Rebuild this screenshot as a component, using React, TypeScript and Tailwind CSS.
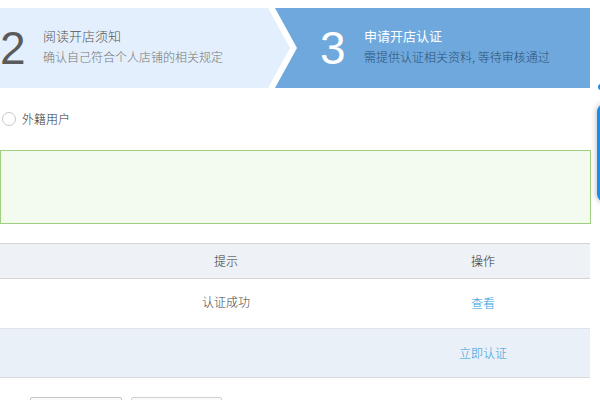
const cjk = "font-['Microsoft_YaHei','Noto_Sans_CJK_SC',sans-serif]";

function Steps() {
  return (
    <div className="relative mt-2 h-20 w-[590px] bg-[#6fa8dc]">
      {/* white chevron border, then light step on top */}
      <div className="absolute inset-y-0 left-0 w-[298px] bg-white [clip-path:polygon(0_0,275px_0,297px_40px,275px_80px,0_80px)]" />
      <div className="absolute inset-y-0 left-0 w-[291px] bg-[#e3effc] [clip-path:polygon(0_0,268px_0,290px_40px,268px_80px,0_80px)]" />
      <div className="relative flex h-full items-center">
        <div className="flex w-[320px] items-center">
          <span className="w-[43px] pb-[1px] font-['Liberation_Sans',sans-serif] text-[46px] leading-none font-light text-[#5a5a5a]">2</span>
          <div className="flex flex-col gap-[3px] pb-[4px]">
            <span className="text-[13px] leading-[18px] font-light text-[#555]">阅读开店须知</span>
            <span className="text-[12px] leading-[17px] font-light text-[#777]">确认自己符合个人店铺的相关规定</span>
          </div>
        </div>
        <div className="flex items-center">
          <span className="w-[44px] pb-[1px] font-['Liberation_Sans',sans-serif] text-[46px] leading-none font-light text-white">3</span>
          <div className="flex flex-col gap-[3px] pb-[4px]">
            <span className="text-[13px] leading-[18px] text-white">申请开店认证</span>
            <span className="text-[12px] leading-[17px] font-light text-[#2b5277]">需提供认证相关资料, 等待审核通过</span>
          </div>
        </div>
      </div>
    </div>
  );
}

export default function App() {
  return (
    <div className={`relative h-[400px] w-[600px] overflow-hidden bg-white ${cjk}`}>
      <Steps />

      <div className="mt-[23px] flex h-4 items-center gap-[6px] pl-[2px]">
        <span className="h-[14px] w-[14px] rounded-full border border-[#c8c8c8] bg-white" />
        <span className="text-[12px] font-light text-[#333]">外籍用户</span>
      </div>

      <div className="mt-[23px] h-[74px] w-[591px] border border-[#9fcf80] bg-[#f3faee]" />

      <div className="mt-[19px] w-[590px] text-[12px] font-light">
        <div className="grid h-[36px] grid-cols-[76px_300px_214px] items-center border-y border-[#d5d5d5] bg-[#eef1f5] text-[#333]">
          <span />
          <span className="text-center">提示</span>
          <span className="text-center">操作</span>
        </div>
        <div className="grid h-[50px] grid-cols-[76px_300px_214px] items-center border-b border-[#e0e4ea] bg-white">
          <span />
          <span className="pb-[4px] text-center text-[#444]">认证成功</span>
          <span className="pb-[2px] text-center text-[#2d9cdb]">查看</span>
        </div>
        <div className="grid h-[49px] grid-cols-[76px_300px_214px] items-center border-b border-[#d9d9d9] bg-[#eaf0f7]">
          <span />
          <span />
          <span className="text-center text-[#2d9cdb]">立即认证</span>
        </div>
      </div>

      <div className="mt-[19px] flex gap-[9px] pl-[30px]">
        <div className="h-8 w-[92px] rounded-[2px] border border-[#c6c6c6] bg-[#fafafa]" />
        <div className="h-8 w-[91px] rounded-[2px] border border-[#d0d0d0] bg-[#fafafa]" />
      </div>

      {/* floating side widget, mostly off-screen */}
      <div className="absolute top-[104px] left-[597px] h-[98px] w-10 rounded-l-lg bg-[#1a8ceb] shadow-[0_0_6px_rgba(0,0,0,0.3)]" />
      <div className="absolute top-[84px] left-[598px] h-[6px] w-4 rounded-l-full bg-[#1a8ceb]" />
    </div>
  );
}
